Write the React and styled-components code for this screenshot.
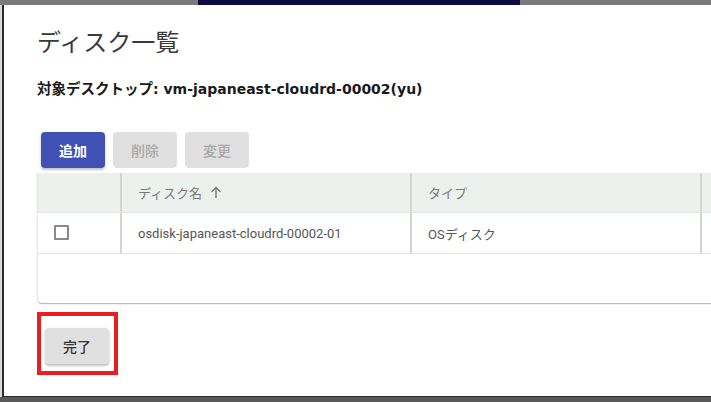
import React from "react";
import styled, { createGlobalStyle } from "styled-components";

const GlobalStyle = createGlobalStyle`
  html, body {
    margin: 0;
    padding: 0;
    width: 711px;
    height: 402px;
    overflow: hidden;
  }
  body {
    font-family: Roboto, "Noto Sans CJK JP", sans-serif;
  }
`;

const Screen = styled.div`
  width: 711px;
  height: 402px;
  background: #595959;
  display: flex;
  flex-direction: column;
  overflow: hidden;
`;

const TopStrip = styled.div`
  height: 5px;
  display: flex;
  flex-shrink: 0;
`;

const StripPart = styled.div`
  background: ${(p) => p.color};
  width: ${(p) => (p.width ? `${p.width}px` : "auto")};
  flex: ${(p) => (p.width ? "none" : 1)};
`;

const Stage = styled.div`
  display: flex;
  height: 392px;
  flex-shrink: 0;
`;

const Gutter = styled.div`
  width: 2px;
  background: #d8d8d8;
`;

const Dialog = styled.div`
  flex: 1;
  background: #fff;
  border-left: 2px solid #2c2c2c;
  border-bottom: 1px solid #2a2a2a;
  padding: 20px 0 0 33px;
  overflow: hidden;
  display: flex;
  flex-direction: column;
  align-items: flex-start;
`;

const Title = styled.h1`
  margin: 0;
  font-family: "Noto Sans CJK JP", sans-serif;
  font-weight: 400;
  font-size: 24px;
  line-height: 32px;
  color: #3a3a3a;
`;

const Target = styled.div`
  margin-top: 21px;
  height: 20px;
  font-family: "Noto Sans CJK JP", sans-serif;
  font-weight: 700;
  font-size: 14.5px;
  line-height: 20px;
  color: #1a1a1a;
`;

const Latin = styled.span`
  font-family: "DejaVu Sans", "Noto Sans CJK JP", sans-serif;
  font-size: 14px;
  line-height: 1;
`;

const Toolbar = styled.div`
  margin-top: 34px;
  display: flex;
  gap: 8px;
  padding-left: 4px;
`;

const Button = styled.button`
  width: 64px;
  height: 36px;
  border: none;
  border-radius: 4px;
  font-family: "Noto Sans CJK JP", sans-serif;
  font-size: 14px;
  font-weight: ${(p) => (p.primary ? 700 : 500)};
  cursor: pointer;
  background: ${(p) => (p.primary ? "#3f51b5" : "#e0e0e0")};
  color: ${(p) => (p.primary ? "#fff" : p.disabled ? "#a8a8a8" : "#333")};
  box-shadow: ${(p) =>
    p.disabled
      ? "none"
      : "0 2px 2px rgba(0,0,0,0.18), 0 1px 4px rgba(0,0,0,0.1)"};
`;

const Paper = styled.div`
  margin-top: 5px;
  height: 130px;
  width: 700px;
  border-left: 1px solid #e6e6e6;
  border-radius: 0 0 0 5px;
  box-shadow: 0 2px 1px -1px rgba(0, 0, 0, 0.22), 0 1px 2px rgba(0, 0, 0, 0.12);
`;

const Row = styled.div`
  display: grid;
  grid-template-columns: 82px 290px 290px 40px;
  height: ${(p) => (p.head ? 39 : 40)}px;
  background: ${(p) => (p.head ? "#edf1ee" : "#fff")};
  border-bottom: 1px solid #e2e4e2;
`;

const Cell = styled.div`
  display: flex;
  align-items: center;
  padding-left: 16px;
  border-left: ${(p) => (p.first ? "none" : "2px solid #d3d5d3")};
  font-size: ${(p) => (p.head ? 13 : 13)}px;
  color: ${(p) => (p.head ? "#7a7a7a" : "#555")};
  gap: 8px;
  white-space: nowrap;
`;

const Check = styled.span`
  width: 11px;
  height: 11px;
  border: 2px solid #8a8a8a;
  border-radius: 1px;
  margin-top: -1px;
`;

const Highlight = styled.div`
  margin-top: 9px;
  border: 4px solid #ec1c24;
  padding: 12px 5px 7px 4px;
`;

const SortArrow = () => (
  <svg width="12" height="13" viewBox="0 0 12 13" fill="none" stroke="#777" strokeWidth="1.4">
    <path d="M6 12V1.5M1.5 6L6 1.5L10.5 6" />
  </svg>
);

export default function App() {
  return (
    <>
      <GlobalStyle />
      <Screen>
        <TopStrip>
          <StripPart color="#7b7b7b" width={198} />
          <StripPart color="#0b0b3f" width={322} />
          <StripPart color="#7b7b7b" />
        </TopStrip>
        <Stage>
          <Gutter />
          <Dialog>
            <Title>ディスク一覧</Title>
            <Target>
              対象デスクトップ<Latin>: vm-japaneast-cloudrd-00002(yu)</Latin>
            </Target>
            <Toolbar>
              <Button primary>追加</Button>
              <Button disabled>削除</Button>
              <Button disabled>変更</Button>
            </Toolbar>
            <Paper>
              <Row head>
                <Cell head first />
                <Cell head>
                  ディスク名 <SortArrow />
                </Cell>
                <Cell head>タイプ</Cell>
                <Cell head />
              </Row>
              <Row>
                <Cell first>
                  <Check />
                </Cell>
                <Cell>osdisk-japaneast-cloudrd-00002-01</Cell>
                <Cell>OSディスク</Cell>
                <Cell />
              </Row>
            </Paper>
            <Highlight>
              <Button>完了</Button>
            </Highlight>
          </Dialog>
        </Stage>
      </Screen>
    </>
  );
}
